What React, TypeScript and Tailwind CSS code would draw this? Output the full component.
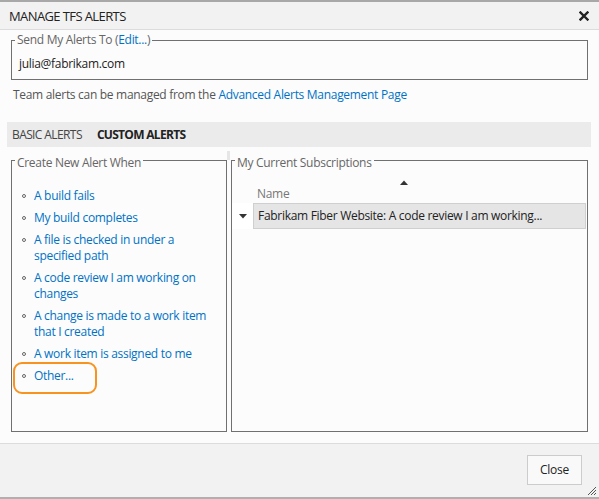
import React from "react";

const FONT = { fontFamily: '"Open Sans", "Noto Sans", "Liberation Sans", sans-serif' };

const items: string[][] = [
  ["A build fails"],
  ["My build completes"],
  ["A file is checked in under a", "specified path"],
  ["A code review I am working on", "changes"],
  ["A change is made to a work item", "that I created"],
  ["A work item is assigned to me"],
  ["Other..."],
];

export default function App() {
  return (
    <div
      className="w-[599px] h-[499px] flex flex-col bg-[#fcfcfc] text-[12px] leading-[16px] tracking-[-0.3px] text-[#222] overflow-hidden"
      style={FONT}
    >
      <div className="h-[2px] bg-[#a8a8a8] shrink-0" />
      {/* Title bar */}
      <div className="h-[28px] shrink-0 bg-[#f2f2f2] border-b border-[#dcdcdc] flex items-center justify-between pl-[9px] pr-[10px]">
        <span className="text-[13px] text-[#222] tracking-[-0.6px]">MANAGE TFS ALERTS</span>
        <svg width="10" height="10" viewBox="0 0 10 10" className="mt-[1px]">
          <path d="M1.5 1.5 L8.5 8.5 M8.5 1.5 L1.5 8.5" stroke="#222" strokeWidth="2.4" strokeLinecap="square" />
        </svg>
      </div>

      {/* Body */}
      <div className="flex-1 flex flex-col pt-[2px] min-h-0">
        <fieldset className="mx-[11px] border border-[#707070]">
          <legend className="ml-[3px] px-[2px] text-[#666]">
            Send My Alerts To (<span className="text-[#0072c6]">Edit...</span>)
          </legend>
          <div className="pl-[7px] pt-[8px] pb-[7px] text-[#222]">julia@fabrikam.com</div>
        </fieldset>

        <div className="mt-[7px] pl-[13px] text-[#555]">
          Team alerts can be managed from the <span className="text-[#0072c6]">Advanced Alerts Management Page</span>
        </div>

        <div className="mt-[19px] ml-[7px] mr-[8px] h-[25px] bg-[#ebebeb] flex items-center pl-[5px] gap-[15px] tracking-[-0.6px]">
          <span className="text-[#444]">BASIC ALERTS</span>
          <span className="font-bold text-[#222] tracking-[-0.7px]">CUSTOM ALERTS</span>
        </div>

        <div className="flex-1 flex mt-[2px] mb-[11px] pl-[11px] pr-[11px] min-h-0">
          {/* Left panel */}
          <fieldset className="w-[216px] shrink-0 border border-[#707070]">
            <legend className="ml-[3px] px-[2px] pt-[6px] text-[#666]">Create New Alert When</legend>
            <ul className="flex flex-col gap-[6px] pt-[17px] pl-[10px]">
              {items.map((lines, i) => (
                <li key={i} className="relative flex">
                  <span className="w-[12px] shrink-0 pt-[6px]">
                    <span className="block w-[4px] h-[4px] rounded-full border border-[#666]" />
                  </span>
                  <span className="text-[#0072c6]">
                    {lines.map((l, j) => (
                      <div key={j}>{l}</div>
                    ))}
                  </span>
                  {i === items.length - 1 && (
                    <div className="absolute left-[-9px] top-[-6px] w-[84px] h-[32px] rounded-[9px] border-2 border-[#f7931e]" />
                  )}
                </li>
              ))}
            </ul>
          </fieldset>

          {/* Splitter */}
          <div className="w-[4px] shrink-0">
            <div className="mt-[2px] h-[9px] w-[3px] bg-[#e6e6e6]" />
          </div>

          {/* Right panel */}
          <fieldset className="flex-1 border border-[#707070]">
            <legend className="ml-[3px] px-[2px] pt-[6px] text-[#666]">My Current Subscriptions</legend>
            <div className="pt-[9px] pl-[21px]">
              <div className="h-[5px] pl-[147px]">
                <svg width="8" height="5" viewBox="0 0 8 5" className="block">
                  <path d="M0 5 L4 0.5 L8 5 Z" fill="#333" />
                </svg>
              </div>
              <div className="pl-[4px] pt-[1px] text-[#777]">Name</div>
            </div>
            <div className="mt-[1px] mr-[1px] flex h-[26px]">
              <div className="w-[21px] shrink-0 bg-white flex items-center justify-center">
                <svg width="8" height="5" viewBox="0 0 8 5" className="block">
                  <path d="M0 0 L8 0 L4 4.5 Z" fill="#333" />
                </svg>
              </div>
              <div className="flex-1 bg-[#e5e5e5] border border-[#cfcfcf] flex items-center pl-[4px] text-[#222]">
                Fabrikam Fiber Website: A code review I am working...
              </div>
            </div>
          </fieldset>
        </div>
      </div>

      {/* Footer */}
      <div className="relative h-[54px] shrink-0 bg-[#f2f2f2] border-t border-[#dcdcdc] flex justify-end items-start pt-[11px] pr-[17px]">
        <button className="w-[55px] h-[30px] bg-[#f9f9f9] border border-[#cccccc] text-[#222] text-[12px] tracking-[-0.3px]" style={FONT}>
          Close
        </button>
        <svg width="12" height="12" viewBox="0 0 12 12" className="absolute right-[2px] bottom-[1px]">
          <path d="M11 3 L3 11 M11 6 L6 11 M11 9 L9 11" stroke="#555" strokeWidth="1" />
        </svg>
      </div>
      <div className="h-[2px] bg-[#b0b0b0] shrink-0" />
    </div>
  );
}
